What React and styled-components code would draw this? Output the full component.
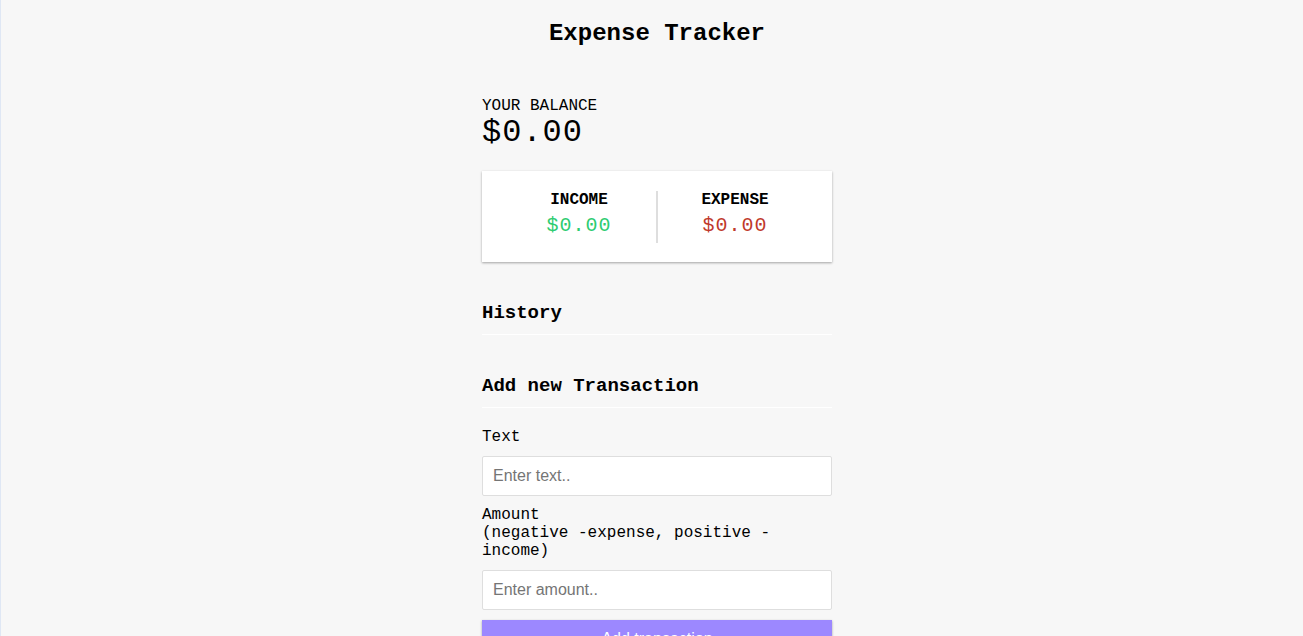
import React from 'react';
import styled, { createGlobalStyle } from 'styled-components';

const GlobalStyle = createGlobalStyle`
  html, body {
    margin: 0;
    padding: 0;
    background-color: #f7f7f7;
  }

  body {
    font-family: 'Liberation Mono', 'Courier New', monospace;
    color: #000;
  }

  #root {
    border-left: 1px solid #dfe7f4;
    min-height: 100vh;
    box-sizing: border-box;
    padding-left: 10px;
  }
`;

const Container = styled.div`
  width: 350px;
  margin: 0 auto;
  padding-top: 20px;
`;

const Title = styled.h2`
  margin: 0;
  font-size: 24px;
  line-height: 28px;
  font-weight: bold;
  text-align: center;
`;

const BalanceLabel = styled.h4`
  margin: 49px 0 0;
  font-size: 16px;
  line-height: 18px;
  font-weight: normal;
  text-transform: uppercase;
`;

const Balance = styled.h1`
  margin: 0;
  font-size: 32px;
  line-height: 36px;
  letter-spacing: 1px;
  font-weight: normal;
`;

const Card = styled.div`
  display: flex;
  background-color: #fff;
  box-shadow: 0 1px 3px rgba(0, 0, 0, 0.12), 0 1px 2px rgba(0, 0, 0, 0.24);
  padding: 20px 20px 19px;
  margin: 20px 0 0;
`;

const Column = styled.div`
  flex: 1;
  text-align: center;

  &:first-of-type {
    border-right: 2px solid #dedede;
  }
`;

const ColumnLabel = styled.h4`
  margin: 0;
  font-size: 16px;
  line-height: 18px;
  font-weight: bold;
  text-transform: uppercase;
`;

const Money = styled.p`
  margin: 5px 0;
  font-size: 20px;
  line-height: 24px;
  letter-spacing: 1px;
  color: ${({ $type }) => ($type === 'plus' ? '#2ecc71' : '#c0392b')};
`;

const SectionTitle = styled.h3`
  margin: 40px 0 0;
  padding-bottom: 10px;
  font-size: 19px;
  line-height: 22px;
  font-weight: bold;
  border-bottom: 1px solid #fff;
`;

const Form = styled.form`
  margin-top: 20px;
`;

const FormControl = styled.div`
  margin-bottom: 10px;
`;

const Label = styled.label`
  display: block;
  margin-bottom: 10px;
  font-size: 16px;
  line-height: 18px;
`;

const Input = styled.input`
  display: block;
  width: 100%;
  height: 40px;
  box-sizing: border-box;
  border: 1px solid #dedede;
  border-radius: 2px;
  padding: 10px;
  font-family: 'Liberation Sans', Arial, sans-serif;
  font-size: 16px;
  background: #fff;
  outline: none;

  &::placeholder {
    color: #757575;
  }
`;

const Button = styled.button`
  display: block;
  width: 100%;
  background-color: #9c88ff;
  box-shadow: 0 1px 3px rgba(0, 0, 0, 0.12), 0 1px 2px rgba(0, 0, 0, 0.24);
  color: #fff;
  border: 0;
  font-family: 'Liberation Sans', Arial, sans-serif;
  font-size: 16px;
  padding: 10px;
  margin: 0 0 30px;
  cursor: pointer;
`;

export default function App() {
  return (
    <>
      <GlobalStyle />
      <Container>
        <Title>Expense Tracker</Title>

        <BalanceLabel>Your Balance</BalanceLabel>
        <Balance>$0.00</Balance>

        <Card>
          <Column>
            <ColumnLabel>Income</ColumnLabel>
            <Money $type="plus">$0.00</Money>
          </Column>
          <Column>
            <ColumnLabel>Expense</ColumnLabel>
            <Money $type="minus">$0.00</Money>
          </Column>
        </Card>

        <SectionTitle>History</SectionTitle>

        <SectionTitle>Add new Transaction</SectionTitle>
        <Form onSubmit={(e) => e.preventDefault()}>
          <FormControl>
            <Label htmlFor="text">Text</Label>
            <Input type="text" id="text" placeholder="Enter text.." />
          </FormControl>
          <FormControl>
            <Label htmlFor="amount">
              Amount <br />
              (negative -expense, positive - income)
            </Label>
            <Input type="number" id="amount" placeholder="Enter amount.." />
          </FormControl>
          <Button type="submit">Add transaction</Button>
        </Form>
      </Container>
    </>
  );
}
